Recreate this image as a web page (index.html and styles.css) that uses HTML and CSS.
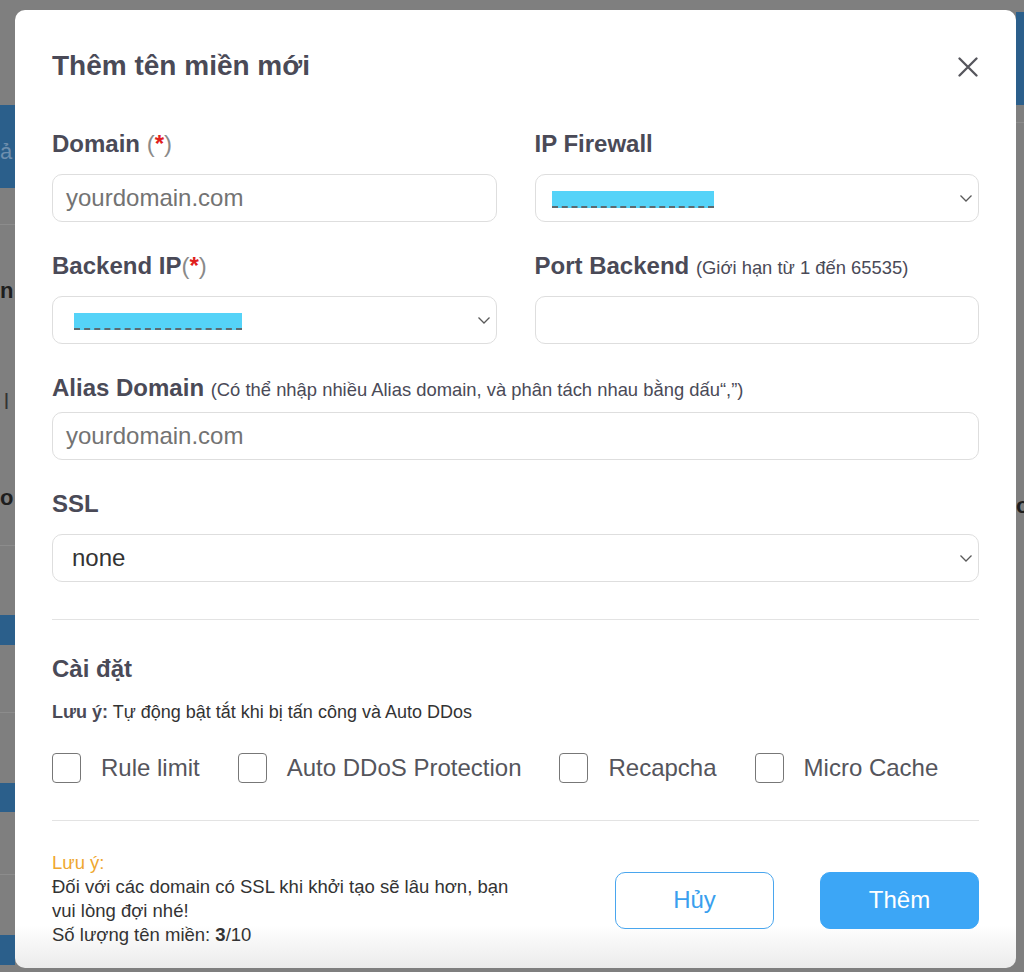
FILE: index.html
```html
<!DOCTYPE html>
<html lang="vi">
<head>
<meta charset="utf-8">
<title>Thêm tên miền mới</title>
<link rel="stylesheet" href="styles.css">
</head>
<body>
<div class="backdrop" aria-hidden="true">
  <div class="strip strip-left">
    <div class="band b-105"></div>
    <div class="band blue b-83"><span class="frag frag-a">ả</span></div>
    <div class="band line b-37"></div>
    <div class="band b-320"><span class="frag frag-n">n</span><span class="frag frag-l">l</span><span class="frag frag-o">o</span></div>
    <div class="band line-top b-70"></div>
    <div class="band blue b-30"></div>
    <div class="band line b-68"></div>
    <div class="band b-70"></div>
    <div class="band blue b-29"></div>
    <div class="band line b-63"></div>
    <div class="band b-60"></div>
    <div class="band blue b-30"></div>
  </div>
  <div class="strip strip-right">
    <div class="band b-12"></div>
    <div class="band blue b-93"></div>
    <div class="band line b-18"></div>
    <div class="band b-370"></div>
    <div class="band b-30 rfrag"><span class="frag">o</span></div>
  </div>
</div>

<div class="modal" role="dialog" aria-labelledby="mt">
  <div class="modal-head">
    <h2 class="modal-title" id="mt">Thêm tên miền mới</h2>
    <button class="close" type="button" aria-label="Đóng">
      <svg viewBox="0 0 20 20" width="20" height="20"><path d="M1.5 1.5L18.5 18.5M18.5 1.5L1.5 18.5"/></svg>
    </button>
  </div>

  <div class="form-grid">
    <div class="field">
      <label class="label">Domain <span class="req">(<span class="star">*</span>)</span></label>
      <div class="control"><span class="placeholder">yourdomain.com</span></div>
    </div>
    <div class="field">
      <label class="label">IP Firewall</label>
      <div class="control select pad-17">
        <span class="redact redact-1"></span>
        <svg class="chev" viewBox="0 0 12 7" width="12" height="7"><path d="M0.5 0.5L6 6L11.5 0.5"/></svg>
      </div>
    </div>
    <div class="field">
      <label class="label">Backend IP<span class="req">(<span class="star">*</span>)</span></label>
      <div class="control select pad-22">
        <span class="redact redact-2"></span>
        <svg class="chev" viewBox="0 0 12 7" width="12" height="7"><path d="M0.5 0.5L6 6L11.5 0.5"/></svg>
      </div>
    </div>
    <div class="field">
      <label class="label">Port Backend <span class="hint">(Giới hạn từ 1 đến 65535)</span></label>
      <div class="control"></div>
    </div>
    <div class="field wide">
      <label class="label tight">Alias Domain <span class="hint">(Có thể nhập nhiều Alias domain, và phân tách nhau bằng dấu“,”)</span></label>
      <div class="control"><span class="placeholder">yourdomain.com</span></div>
    </div>
    <div class="field wide">
      <label class="label">SSL</label>
      <div class="control select pad-19">
        <span class="value">none</span>
        <svg class="chev" viewBox="0 0 12 7" width="12" height="7"><path d="M0.5 0.5L6 6L11.5 0.5"/></svg>
      </div>
    </div>
  </div>

  <hr class="sep sep-1">

  <h3 class="section">Cài đặt</h3>
  <p class="note"><b>Lưu ý:</b> Tự động bật tắt khi bị tấn công và Auto DDos</p>

  <div class="checks">
    <label class="check"><span class="box"></span>Rule limit</label>
    <label class="check"><span class="box"></span>Auto DDoS Protection</label>
    <label class="check"><span class="box"></span>Recapcha</label>
    <label class="check"><span class="box"></span>Micro Cache</label>
  </div>

  <hr class="sep sep-2">

  <div class="footer">
    <div class="footer-text">
      <div class="warn">Lưu ý:</div>
      <div>Đối với các domain có SSL khi khởi tạo sẽ lâu hơn, bạn vui lòng đợi nhé!</div>
      <div>Số lượng tên miền: <b>3</b>/10</div>
    </div>
    <div class="actions">
      <button class="btn btn-outline" type="button">Hủy</button>
      <button class="btn btn-primary" type="button">Thêm</button>
    </div>
  </div>
</div>
</body>
</html>
```

FILE: styles.css
```css
* { box-sizing: border-box; }

html, body { margin: 0; padding: 0; }

body {
  width: 1024px;
  height: 972px;
  overflow: hidden;
  position: relative;
  background: #7f7f7f;
  font-family: "Liberation Sans", Arial, Helvetica, sans-serif;
}

/* dimmed page behind the dialog */
.backdrop {
  display: flex;
  justify-content: space-between;
  height: 972px;
}
.strip { display: flex; flex-direction: column; overflow: hidden; }
.strip-left { width: 15px; }
.strip-right { width: 8px; }
.band { flex: none; position: relative; color: #1e1e1e; font-weight: bold; font-size: 22px; }
.band.blue { background: #2b5f8b; }
.band.line { border-bottom: 1px solid #8c8c8c; }
.band.line-top { border-top: 1px solid #8c8c8c; }
.b-12 { height: 12px; }
.b-18 { height: 18px; }
.b-29 { height: 29px; }
.b-30 { height: 30px; }
.b-37 { height: 37px; }
.b-60 { height: 60px; }
.b-63 { height: 63px; }
.b-68 { height: 68px; }
.b-70 { height: 70px; }
.b-83 { height: 83px; }
.b-93 { height: 93px; }
.b-105 { height: 105px; }
.b-320 { height: 320px; }
.b-370 { height: 370px; }
.frag { position: absolute; line-height: 1; }
.frag-a { left: 0; top: 36px; color: #6f8fae; font-weight: normal; }
.frag-n { left: 0; top: 55px; }
.frag-l { left: 4px; top: 166px; font-weight: normal; color: #333; }
.frag-o { left: 0; top: 262px; }
.rfrag .frag { left: 0; top: 2px; }

/* dialog */
.modal {
  position: absolute;
  left: 15px;
  top: 10px;
  width: 1001px;
  height: 958px;
  background: linear-gradient(to bottom, #fff 0, #fff 915px, #ebebeb 958px);
  border-radius: 10px;
  padding: 40px 37px 0;
  color: #4a4a57;
}

.modal-head {
  display: flex;
  justify-content: space-between;
  align-items: center;
  height: 32px;
}
.modal-title {
  margin: 0;
  font-size: 28px;
  line-height: 32px;
  font-weight: bold;
  color: #4a4a57;
}
.close {
  border: 0;
  background: none;
  padding: 0;
  margin: 2px 1px 0 0;
  width: 20px;
  height: 20px;
  display: flex;
}
.close svg path { stroke: #55555c; stroke-width: 2.3; fill: none; stroke-linecap: round; }

.form-grid {
  margin-top: 48px;
  display: grid;
  grid-template-columns: 1fr 1fr;
  column-gap: 38px;
  row-gap: 30px;
}
.field { display: flex; flex-direction: column; }
.field.wide { grid-column: 1 / -1; }

.label {
  display: block;
  font-size: 24px;
  line-height: 28px;
  height: 28px;
  font-weight: bold;
  color: #4a4a57;
  margin-bottom: 16px;
  white-space: nowrap;
}
.label.tight { margin-bottom: 10px; }
.req { font-weight: normal; color: #8a8a8a; }
.star { color: #e0201c; font-weight: bold; }
.hint { font-size: 18.4px; line-height: 18px; font-weight: normal; color: #4a4a57; }

.control {
  height: 48px;
  border: 1px solid #dedede;
  border-radius: 10px;
  display: flex;
  align-items: center;
  padding-left: 13px;
  position: relative;
  background: #fff;
}
.placeholder { font-size: 24px; color: #737373; }
.value { font-size: 24px; color: #333; }
.select { padding-right: 6px; }
.pad-17 { padding-left: 16px; }
.pad-22 { padding-left: 21px; }
.pad-19 { padding-left: 19px; }
.chev { margin-left: auto; }
.chev path { stroke: #5a5a5a; stroke-width: 1.3; fill: none; }

.redact {
  display: block;
  height: 17px;
  background: #55d3f8;
  border-bottom: 2px dashed #5c6a70;
  margin-top: 2px;
}
.redact-1 { width: 162px; }
.redact-2 { width: 168px; }

.sep {
  border: 0;
  border-top: 1px solid #e3e3e3;
  margin: 0;
}
.sep-1 { margin-top: 37px; }
.sep-2 { margin-top: 37px; }

.section {
  margin: 35px 0 0;
  font-size: 24px;
  line-height: 28px;
  font-weight: bold;
  color: #4a4a57;
}
.note {
  margin: 18px 0 0;
  font-size: 18px;
  line-height: 22px;
  color: #333;
}
.note b { color: #4a4a57; }

.checks {
  margin-top: 30px;
  display: flex;
  gap: 38px;
  height: 30px;
}
.check {
  display: flex;
  align-items: center;
  gap: 20px;
  font-size: 24px;
  color: #55555c;
  white-space: nowrap;
}
.box {
  width: 29px;
  height: 30px;
  border: 1.5px solid #777;
  border-radius: 4px;
  flex: none;
}

.footer {
  margin-top: 30px;
  display: flex;
  justify-content: space-between;
  align-items: center;
}
.footer-text {
  width: 462px;
  font-size: 18.5px;
  line-height: 24px;
  color: #333;
}
.warn { color: #efa730; }
.actions { display: flex; gap: 46px; margin-top: 2px; }
.btn {
  width: 159px;
  height: 57px;
  border-radius: 10px;
  font-family: inherit;
  font-size: 24px;
  cursor: pointer;
}
.btn-outline {
  background: #fff;
  border: 1.5px solid #4aa6ee;
  color: #3a9fee;
}
.btn-primary {
  background: #3ca6f6;
  border: 1.5px solid #3ca6f6;
  color: #fff;
}
```
